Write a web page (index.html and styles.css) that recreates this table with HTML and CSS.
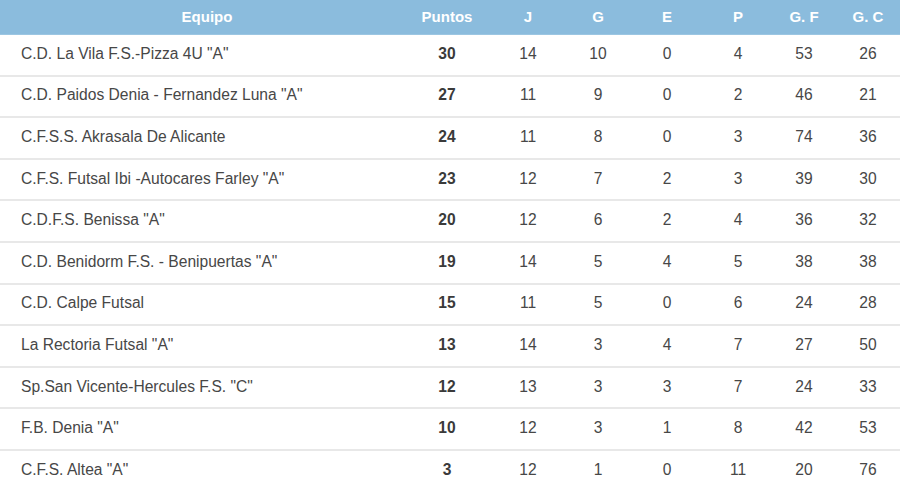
FILE: index.html
```html
<!DOCTYPE html>
<html lang="es">
<head>
<meta charset="utf-8">
<title>Clasificación</title>
<link rel="stylesheet" href="styles.css">
</head>
<body>
<table class="standings">
  <colgroup>
    <col class="c-team"><col class="c-pts"><col class="c-j"><col class="c-g"><col class="c-e"><col class="c-p"><col class="c-gf"><col class="c-gc">
  </colgroup>
  <thead>
    <tr><th>Equipo</th><th>Puntos</th><th>J</th><th>G</th><th>E</th><th>P</th><th>G. F</th><th class="last">G. C</th></tr>
  </thead>
  <tbody>
    <tr><td class="team">C.D. La Vila F.S.-Pizza 4U "A"</td><td class="pts">30</td><td>14</td><td>10</td><td>0</td><td>4</td><td>53</td><td class="last">26</td></tr>
    <tr><td class="team">C.D. Paidos Denia - Fernandez Luna "A"</td><td class="pts">27</td><td>11</td><td>9</td><td>0</td><td>2</td><td>46</td><td class="last">21</td></tr>
    <tr><td class="team">C.F.S.S. Akrasala De Alicante</td><td class="pts">24</td><td>11</td><td>8</td><td>0</td><td>3</td><td>74</td><td class="last">36</td></tr>
    <tr><td class="team">C.F.S. Futsal Ibi -Autocares Farley "A"</td><td class="pts">23</td><td>12</td><td>7</td><td>2</td><td>3</td><td>39</td><td class="last">30</td></tr>
    <tr><td class="team">C.D.F.S. Benissa "A"</td><td class="pts">20</td><td>12</td><td>6</td><td>2</td><td>4</td><td>36</td><td class="last">32</td></tr>
    <tr><td class="team">C.D. Benidorm F.S. - Benipuertas "A"</td><td class="pts">19</td><td>14</td><td>5</td><td>4</td><td>5</td><td>38</td><td class="last">38</td></tr>
    <tr><td class="team">C.D. Calpe Futsal</td><td class="pts">15</td><td>11</td><td>5</td><td>0</td><td>6</td><td>24</td><td class="last">28</td></tr>
    <tr><td class="team">La Rectoria Futsal "A"</td><td class="pts">13</td><td>14</td><td>3</td><td>4</td><td>7</td><td>27</td><td class="last">50</td></tr>
    <tr><td class="team">Sp.San Vicente-Hercules F.S. "C"</td><td class="pts">12</td><td>13</td><td>3</td><td>3</td><td>7</td><td>24</td><td class="last">33</td></tr>
    <tr><td class="team">F.B. Denia "A"</td><td class="pts">10</td><td>12</td><td>3</td><td>1</td><td>8</td><td>42</td><td class="last">53</td></tr>
    <tr><td class="team">C.F.S. Altea "A"</td><td class="pts">3</td><td>12</td><td>1</td><td>0</td><td>11</td><td>20</td><td class="last">76</td></tr>
  </tbody>
</table>
</body>
</html>
```

FILE: styles.css
```css
html, body {
  margin: 0;
  padding: 0;
  background: #ffffff;
}

.standings {
  width: 900px;
  table-layout: fixed;
  border-collapse: collapse;
  font-family: "Liberation Sans", Arial, sans-serif;
  color: #474747;
}

.c-team { width: 414px; }
.c-pts { width: 66px; }
.c-j { width: 96px; }
.c-g { width: 44px; }
.c-e { width: 94px; }
.c-p { width: 48px; }
.c-gf { width: 84px; }
.c-gc { width: 54px; }

.standings th {
  height: 32px;
  padding: 0 0 2px 0;
  background: #8bbcdd;
  color: #ffffff;
  font-size: 15px;
  font-weight: bold;
  text-align: center;
  border-bottom: 1px solid #9cc6e2;
}

.standings td {
  height: 37.6px;
  padding: 0 0 2px 0;
  font-size: 15.6px;
  text-align: center;
  border-bottom: 2px solid #e8e8e8;
}

.standings td.team {
  text-align: left;
  padding-left: 21px;
}

.standings td.pts {
  font-weight: bold;
  color: #3a3a3a;
}

.standings .last {
  padding-right: 10px;
}
```
